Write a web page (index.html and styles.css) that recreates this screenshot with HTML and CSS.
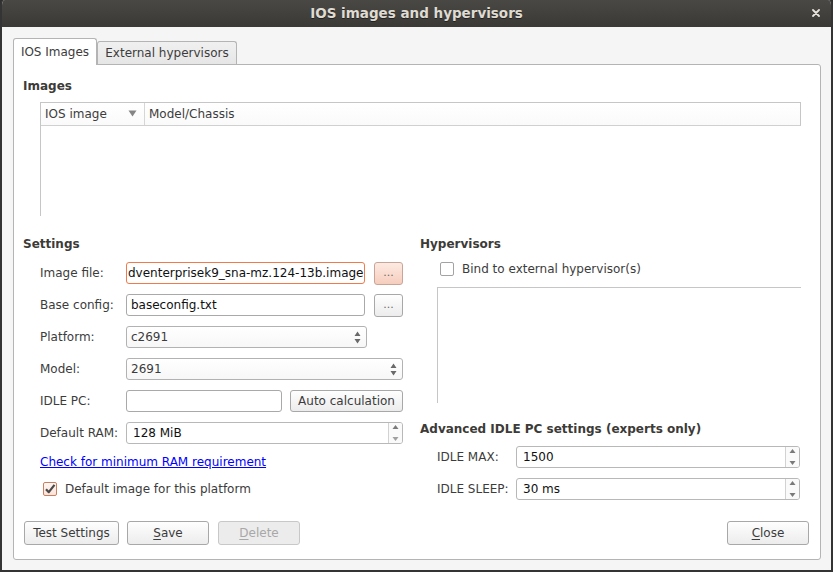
FILE: index.html
```html
<!DOCTYPE html>
<html>
<head>
<meta charset="utf-8">
<title>IOS images and hypervisors</title>
<link rel="stylesheet" href="styles.css">
</head>
<body>
<div class="window">
  <div class="titlebar">
    <span></span>
    <span class="title">IOS images and hypervisors</span>
    <span class="close-x"><svg width="8" height="8" viewBox="0 0 8 8"><path d="M1 1L7 7M7 1L1 7" stroke="#e6e3dc" stroke-width="1.8" stroke-linecap="round"/></svg></span>
  </div>
  <div class="body">
    <div class="tabs">
      <div class="tab active">IOS Images</div>
      <div class="tab inactive">External hypervisors</div>
    </div>
    <div class="pane">
      <div class="section-title">Images</div>
      <div class="table">
        <div class="thead">
          <div class="th th-image">IOS image<svg class="sort" width="9" height="7" viewBox="0 0 9 7"><path d="M0.5 0.5H8.5L4.5 6.5Z" fill="#858585"/></svg></div>
          <div class="th th-model">Model/Chassis</div>
        </div>
      </div>
      <div class="columns">
        <div class="col">
          <div class="section-title">Settings</div>
          <div class="form">
            <div class="row">
              <span class="label">Image file:</span>
              <div class="input focus w241">dventerprisek9_sna-mz.124-13b.image</div>
              <div class="btn dots hot">...</div>
            </div>
            <div class="row">
              <span class="label">Base config:</span>
              <div class="input w241">baseconfig.txt</div>
              <div class="btn dots">...</div>
            </div>
            <div class="row">
              <span class="label">Platform:</span>
              <div class="combo w241"><span>c2691</span><svg width="7" height="13" viewBox="0 0 7 13"><path d="M0.5 5L3.5 0.5L6.5 5Z M0.5 8L3.5 12.5L6.5 8Z" fill="#6a6a6a"/></svg></div>
            </div>
            <div class="row">
              <span class="label">Model:</span>
              <div class="combo grow"><span>2691</span><svg width="7" height="13" viewBox="0 0 7 13"><path d="M0.5 5L3.5 0.5L6.5 5Z M0.5 8L3.5 12.5L6.5 8Z" fill="#6a6a6a"/></svg></div>
            </div>
            <div class="row">
              <span class="label">IDLE PC:</span>
              <div class="input w158"></div>
              <div class="btn auto">Auto calculation</div>
            </div>
            <div class="row">
              <span class="label">Default RAM:</span>
              <div class="spin grow">
                <div class="spin-text">128 MiB</div>
                <div class="spin-btns"><svg width="7" height="18" viewBox="0 0 7 18"><path d="M0.5 5L3.5 1L6.5 5Z" fill="#7a7a7a"/><path d="M0.5 13L3.5 17L6.5 13Z" fill="#a0a0a0"/></svg></div>
              </div>
            </div>
            <a class="link" href="#">Check for minimum RAM requirement</a>
            <div class="check-row">
              <span class="checkbox checked"><svg width="12" height="12" viewBox="0 0 12 12"><path d="M2 6.2L4.8 9.2L10.5 1.8" fill="none" stroke="#4a4a4a" stroke-width="2.2" stroke-linejoin="round"/></svg></span>
              <span>Default image for this platform</span>
            </div>
          </div>
        </div>
        <div class="col">
          <div class="section-title">Hypervisors</div>
          <div class="check-row hv">
            <span class="checkbox"></span>
            <span>Bind to external hypervisor(s)</span>
          </div>
          <div class="hv-list"></div>
          <div class="section-title adv">Advanced IDLE PC settings (experts only)</div>
          <div class="form adv-form">
            <div class="row">
              <span class="label l79">IDLE MAX:</span>
              <div class="spin grow">
                <div class="spin-text">1500</div>
                <div class="spin-btns"><svg width="7" height="18" viewBox="0 0 7 18"><path d="M0.5 5L3.5 1L6.5 5Z" fill="#7a7a7a"/><path d="M0.5 13L3.5 17L6.5 13Z" fill="#7a7a7a"/></svg></div>
              </div>
            </div>
            <div class="row">
              <span class="label l79">IDLE SLEEP:</span>
              <div class="spin grow">
                <div class="spin-text">30 ms</div>
                <div class="spin-btns"><svg width="7" height="18" viewBox="0 0 7 18"><path d="M0.5 5L3.5 1L6.5 5Z" fill="#7a7a7a"/><path d="M0.5 13L3.5 17L6.5 13Z" fill="#7a7a7a"/></svg></div>
              </div>
            </div>
          </div>
        </div>
      </div>
      <div class="buttons">
        <div class="btn b-test">Test Settings</div>
        <div class="btn b82 b-save"><u>S</u>ave</div>
        <div class="btn b82 b-del disabled"><u>D</u>elete</div>
        <div class="spacer"></div>
        <div class="btn b82"><u>C</u>lose</div>
      </div>
    </div>
  </div>
</div>
</body>
</html>
```

FILE: styles.css
```css
html, body {
  margin: 0;
  padding: 0;
}
body {
  font-family: "DejaVu Sans", sans-serif;
  font-size: 12px;
  color: #3c3c3c;
  background: #2f2f2f;
}
.window {
  width: 833px;
  height: 572px;
  box-sizing: border-box;
  background: #f5f5f5;
  border: 2px solid #343434;
  border-top: 0;
  border-radius: 5px 5px 0 0;
  display: flex;
  flex-direction: column;
  overflow: hidden;
}
.titlebar {
  height: 27px;
  flex: none;
  background: linear-gradient(#4a4844, #3a3935);
  display: grid;
  grid-template-columns: 1fr auto 1fr;
  align-items: center;
  margin: 0 -2px;
  color: #dfdbd2;
}
.title {
  font-weight: bold;
  font-size: 13.5px;
  line-height: 27px;
  text-shadow: 0 1px 0 #222;
}
.close-x {
  justify-self: end;
  margin-right: 13px;
  display: flex;
  margin-top: -1px;
}
.body {
  flex: 1;
  display: flex;
  flex-direction: column;
  padding: 11px 10px 0 11px;
}
.tabs {
  display: flex;
  align-items: flex-end;
  height: 27px;
  margin-bottom: -1px;
  position: relative;
  z-index: 1;
}
.tab {
  box-sizing: border-box;
  border: 1px solid #b4b4b4;
  border-bottom: 0;
  border-radius: 3px 3px 0 0;
  text-align: center;
  line-height: 24px;
}
.tab.active {
  width: 84px;
  height: 27px;
  background: #fff;
  line-height: 27px;
}
.tab.inactive {
  width: 140px;
  height: 23px;
  margin-bottom: 1px;
  background: linear-gradient(#f0f0f0, #e6e6e6);
  line-height: 22px;
}
.pane {
  background: #fff;
  border: 1px solid #b4b4b4;
  border-radius: 0 3px 3px 3px;
  height: 496px;
  box-sizing: border-box;
  padding: 13px 19px 0 9px;
  display: flex;
  flex-direction: column;
}
.section-title {
  font-weight: bold;
  line-height: 16px;
  color: #3c3b37;
}
.table {
  margin: 8px 0 0 17px;
  height: 114px;
  box-sizing: border-box;
  border-left: 1px solid #c6c6c6;
  border-top: 1px solid #c6c6c6;
}
.thead {
  display: flex;
  height: 23px;
  box-sizing: border-box;
  border-bottom: 1px solid #d0d0d0;
  border-right: 1px solid #c6c6c6;
  background: linear-gradient(#ffffff, #fafafa);
}
.th {
  display: flex;
  align-items: center;
  padding-left: 4px;
}
.th-image {
  width: 104px;
  box-sizing: border-box;
  border-right: 1px solid #d6d6d6;
}
.sort {
  margin-left: auto;
  margin-right: 7px;
  margin-top: -2px;
}
.columns {
  display: grid;
  grid-template-columns: 380px 1fr;
  column-gap: 17px;
  margin-top: 20px;
}
.form {
  margin-top: 10px;
  padding-left: 17px;
  display: flex;
  flex-direction: column;
  gap: 10px;
}
.row {
  display: flex;
  align-items: center;
  height: 22px;
}
.label {
  width: 86px;
  flex: none;
}
.label.l79 {
  width: 79px;
}
.input, .combo, .spin {
  box-sizing: border-box;
  height: 22px;
  border: 1px solid #a9a9a9;
  border-radius: 3px;
  background: #fff;
  display: flex;
  align-items: center;
  padding-left: 4px;
  color: #111;
  white-space: nowrap;
  overflow: hidden;
}
.input.focus {
  border-color: #f07a4a;
  padding-left: 1px;
}
.w241 { width: 241px; }
.w158 { width: 158px; }
.grow { flex: 1; }
.combo {
  background: linear-gradient(#ffffff, #f7f7f7);
  border-color: #b2b2b2;
  color: #3c3c3c;
  justify-content: space-between;
  padding-right: 5px;
}
.spin {
  padding-left: 0;
  border-color: #b8b8b8;
}
.spin-text {
  flex: 1;
  padding-left: 6px;
}
.spin-btns {
  width: 13px;
  height: 100%;
  border-left: 1px solid #d2d2d2;
  display: flex;
  align-items: center;
  justify-content: center;
  background: #fafafa;
}
.btn {
  box-sizing: border-box;
  height: 22px;
  border: 1px solid #a8a8a8;
  border-radius: 3px;
  background: linear-gradient(#fefefe, #ececec);
  display: flex;
  align-items: center;
  justify-content: center;
  color: #3c3c3c;
  flex: none;
}
.btn u {
  text-decoration-thickness: 1px;
  text-underline-offset: 2px;
}
.dots {
  width: 29px;
  margin-left: 9px;
  height: 23px;
  padding-bottom: 2px;
  font-size: 11px;
  color: #6a6a6a;
}
.dots.hot {
  background: linear-gradient(#fdeae2, #f6cdbd);
  border-color: #c9a597;
}
.auto {
  width: 113px;
  margin-left: 8px;
}
.link {
  color: #0000ff;
  line-height: 16px;
  text-decoration: underline;
  align-self: flex-start;
}
.check-row {
  display: flex;
  align-items: center;
  height: 16px;
  gap: 8px;
  margin-top: 1px;
  margin-left: 3px;
}
.checkbox {
  box-sizing: border-box;
  width: 14px;
  height: 14px;
  border: 1px solid #a3a3a3;
  border-radius: 2px;
  background: #fff;
  display: flex;
  align-items: center;
  justify-content: center;
}
.checkbox.checked {
  border-color: #c88063;
  background: linear-gradient(#fff6f2, #fbe3d9);
}
.check-row.hv {
  margin: 9px 0 0 20px;
}
.hv-list {
  margin: 10px 0 0 17px;
  height: 116px;
  box-sizing: border-box;
  border-top: 1px solid #c6c6c6;
  border-left: 1px solid #c6c6c6;
}
.section-title.adv {
  margin-top: 18px;
}
.adv-form {
  margin-top: 9px;
  padding-right: 1px;
}
.buttons {
  margin-top: auto;
  margin-bottom: 14px;
  margin-left: 1px;
  margin-right: -8px;
  display: flex;
}
.buttons .btn {
  height: 24px;
}
.b-test { width: 95px; }
.b82 { width: 82px; }
.b-save { margin-left: 8px; }
.b-del { margin-left: 9px; }
.btn.disabled {
  background: #ececec;
  border-color: #c8c8c8;
  color: #a8a8a8;
}
.spacer { flex: 1; }
```
